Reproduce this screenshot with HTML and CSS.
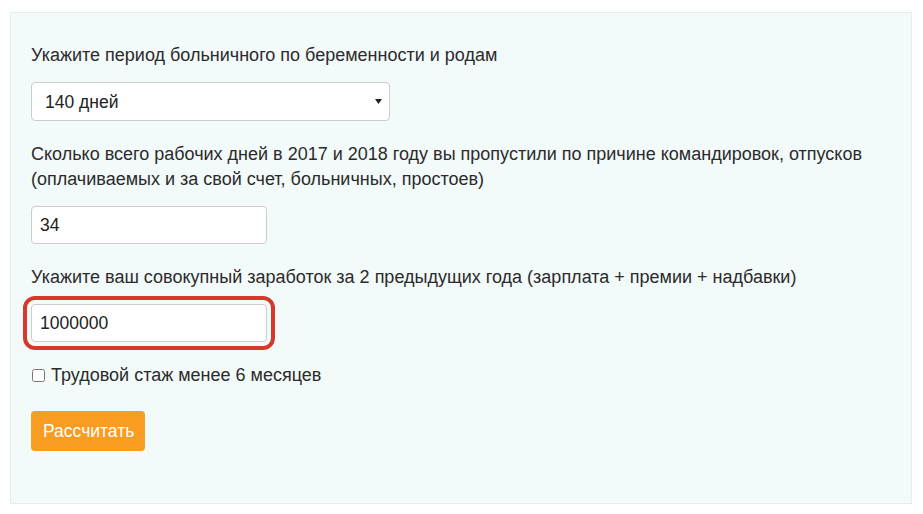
FILE: index.html
```html
<!DOCTYPE html>
<html lang="ru">
<head>
<meta charset="UTF-8" />
<meta name="viewport" content="width=device-width, initial-scale=1" />
<title>Калькулятор декретных</title>
<link rel="stylesheet" href="styles.css">
</head>
<body>
  <form class="calc" id="calcForm">
    <div class="group">
      <label for="period">Укажите период больничного по беременности и родам</label>
      <div class="select-wrap">
        <select name="period" id="period">
          <option>140 дней</option>
          <option>156 дней</option>
          <option>194 дня</option>
        </select>
        <svg class="arrow" width="7" height="5" viewBox="0 0 7 5"><path d="M0 0h7L3.5 5z" fill="#222"/></svg>
      </div>
    </div>
    <div class="group">
      <label for="days">Сколько всего рабочих дней в 2017 и 2018 году вы пропустили по причине командировок, отпусков (оплачиваемых и за свой счет, больничных, простоев)</label>
      <input type="text" name="days" id="days" value="34" />
    </div>
    <div class="group">
      <label for="income">Укажите ваш совокупный заработок за 2 предыдущих года (зарплата + премии + надбавки)</label>
      <input type="text" name="income" id="income" class="marked" value="1000000" />
    </div>
    <div class="check">
      <input type="checkbox" name="short" id="short" />
      <label for="short">Трудовой стаж менее 6 месяцев</label>
    </div>
    <button type="submit">Рассчитать</button>
  </form>
</body>
</html>
```

FILE: styles.css
```css
body { margin: 0; padding: 12px 11px 12px 10px; background: #fff; font-family: "Liberation Sans", Arial, sans-serif; font-size: 18px; color: #2b2b2b; }
.calc { background: #f3fafa; border: 1px solid #e4eded; padding: 30px 20px 50px; height: 410px; }
.group { margin-bottom: 21px; }
.group label { display: block; line-height: 25px; margin-bottom: 14px; }
.select-wrap { position: relative; width: 359px; }
select { appearance: none; -webkit-appearance: none; width: 100%; height: 39px; padding: 0 30px 0 13px; border: 1px solid #ccc; border-radius: 4px; background: #fff; font: inherit; font-size: 17.5px; color: #222; }
.arrow { position: absolute; right: 8px; top: 17px; pointer-events: none; }
input[type="text"] { width: 236px; height: 38px; box-sizing: border-box; padding: 0 8px; border: 1px solid #ccc; border-radius: 4px; background: #fff; font: inherit; font-size: 17.5px; color: #222; }
.marked { outline: 4px solid #d8372c; outline-offset: 4px; }
.check { display: flex; align-items: center; gap: 6px; line-height: 25px; margin-bottom: 23px; }
.check input { margin: -1px 0 0 1px; width: 13px; height: 13px; }
button { background: #f89c22; color: #fff; border: 0; border-radius: 4px; height: 40px; padding: 0 11px 0 12px; font: inherit; font-size: 17.5px; }
```
